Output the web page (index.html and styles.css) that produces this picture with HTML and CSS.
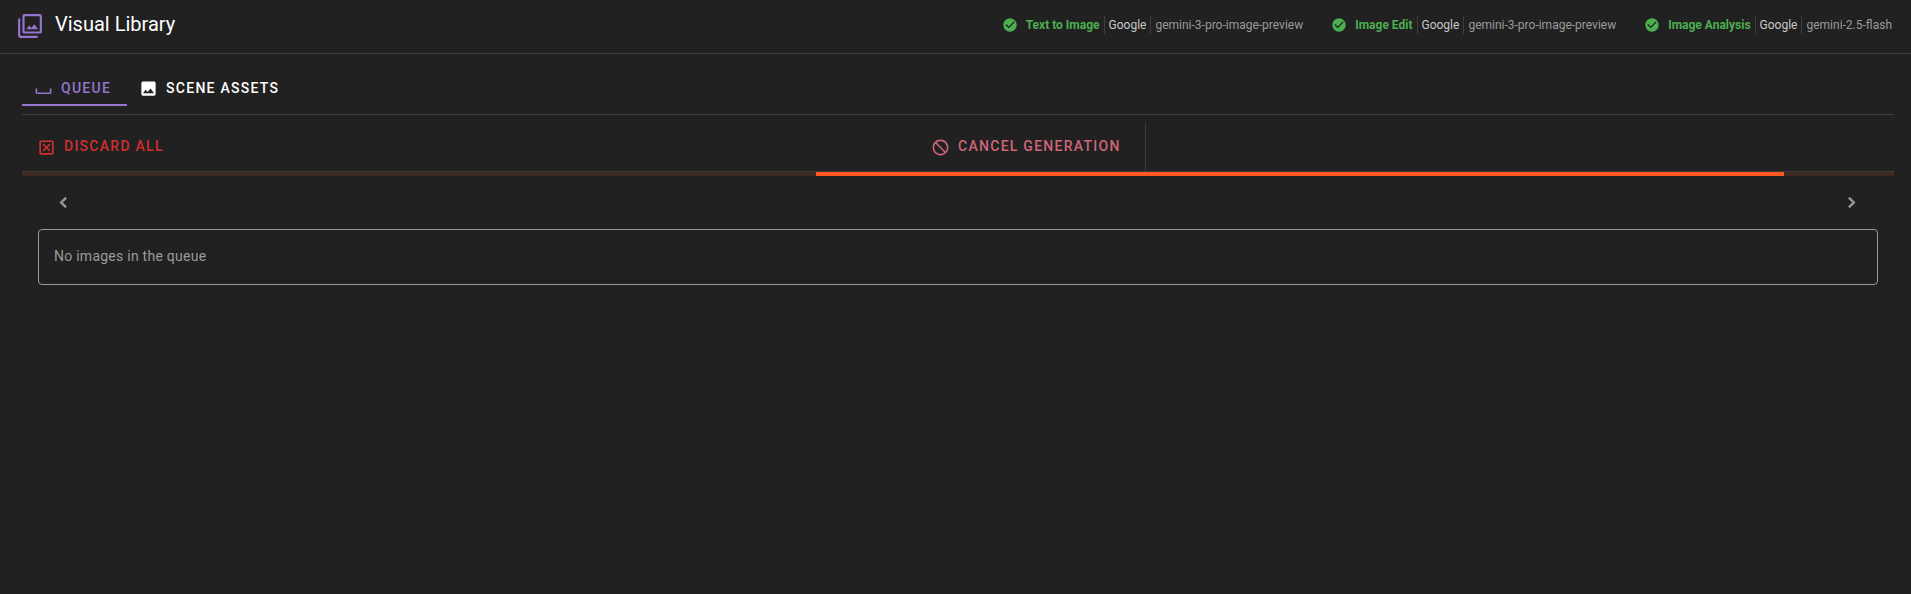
FILE: index.html
```html
<!DOCTYPE html>
<html lang="en">
<head>
    <meta charset="UTF-8">
    <meta name="viewport" content="width=device-width, initial-scale=1.0">
    <title>Visual Library</title>
    <link rel="stylesheet" href="styles.css">
</head>
<body>
    <header class="toolbar">
        <svg class="logo" viewBox="0 0 24 24" aria-hidden="true"><path d="M21,17H7V3H21M21,1H7A2,2 0 0,0 5,3V17A2,2 0 0,0 7,19H21A2,2 0 0,0 23,17V3A2,2 0 0,0 21,1M3,5H1V21A2,2 0 0,0 3,23H19V21H3M15.96,10.29L13.21,13.83L11.25,11.47L8.5,15H19.5L15.96,10.29Z"/></svg>
        <h1 class="title">Visual Library</h1>

        <ul class="backends">
            <li class="backend">
                <svg class="status" viewBox="0 0 24 24" aria-hidden="true"><path d="M12 2C6.5 2 2 6.5 2 12S6.5 22 12 22 22 17.5 22 12 17.5 2 12 2M10 17L5 12L6.41 10.59L10 14.17L17.59 6.58L19 8L10 17Z"/></svg>
                <span class="kind">Text to Image</span>
                <span class="provider">Google</span>
                <span class="model">gemini-3-pro-image-preview</span>
            </li>
            <li class="backend">
                <svg class="status" viewBox="0 0 24 24" aria-hidden="true"><path d="M12 2C6.5 2 2 6.5 2 12S6.5 22 12 22 22 17.5 22 12 17.5 2 12 2M10 17L5 12L6.41 10.59L10 14.17L17.59 6.58L19 8L10 17Z"/></svg>
                <span class="kind">Image Edit</span>
                <span class="provider">Google</span>
                <span class="model">gemini-3-pro-image-preview</span>
            </li>
            <li class="backend">
                <svg class="status" viewBox="0 0 24 24" aria-hidden="true"><path d="M12 2C6.5 2 2 6.5 2 12S6.5 22 12 22 22 17.5 22 12 17.5 2 12 2M10 17L5 12L6.41 10.59L10 14.17L17.59 6.58L19 8L10 17Z"/></svg>
                <span class="kind">Image Analysis</span>
                <span class="provider">Google</span>
                <span class="model">gemini-2.5-flash</span>
            </li>
        </ul>
    </header>

    <main class="content">
        <nav class="tabs" role="tablist">
            <button class="tab active" type="button" role="tab" aria-selected="true">
                <svg class="icon" viewBox="0 0 24 24" aria-hidden="true"><path d="M2 12H4V17H20V12H22V17C22 18.11 21.11 19 20 19H4C2.9 19 2 18.11 2 17V12Z"/></svg>
                Queue
            </button>
            <button class="tab" type="button" role="tab" aria-selected="false">
                <svg class="icon" viewBox="0 0 24 24" aria-hidden="true"><path d="M8.5,13.5L11,16.5L14.5,12L19,18H5M21,19V5C21,3.89 20.1,3 19,3H5A2,2 0 0,0 3,5V19A2,2 0 0,0 5,21H19A2,2 0 0,0 21,19Z"/></svg>
                Scene Assets
            </button>
        </nav>

        <div class="actions">
            <button class="action discard" type="button">
                <svg class="icon" viewBox="0 0 24 24" aria-hidden="true"><path d="M19,19H5V5H19M19,3H5A2,2 0 0,0 3,5V19A2,2 0 0,0 5,21H19A2,2 0 0,0 21,19V5C21,3.89 20.1,3 19,3M17,8.4L13.4,12L17,15.6L15.6,17L12,13.4L8.4,17L7,15.6L10.6,12L7,8.4L8.4,7L12,10.6L15.6,7L17,8.4Z"/></svg>
                Discard All
            </button>
            <div class="generation">
                <button class="action cancel" type="button">
                    <svg class="icon" viewBox="0 0 24 24" aria-hidden="true"><path d="M12 2C17.5 2 22 6.5 22 12S17.5 22 12 22 2 17.5 2 12 6.5 2 12 2M12 4C10.1 4 8.4 4.6 7.1 5.7L18.3 16.9C19.3 15.5 20 13.8 20 12C20 7.6 16.4 4 12 4M16.9 18.3L5.7 7.1C4.6 8.4 4 10.1 4 12C4 16.4 7.6 20 12 20C13.9 20 15.6 19.4 16.9 18.3Z"/></svg>
                    Cancel Generation
                </button>
            </div>
        </div>

        <div class="progress" role="progressbar" aria-label="Generating">
            <div class="progress-bar"></div>
        </div>

        <div class="pager">
            <button class="page-btn" type="button" aria-label="Previous image">
                <svg viewBox="0 0 24 24" aria-hidden="true"><path d="M15.41,16.58L10.83,12L15.41,7.41L14,6L8,12L14,18L15.41,16.58Z"/></svg>
            </button>
            <button class="page-btn" type="button" aria-label="Next image">
                <svg viewBox="0 0 24 24" aria-hidden="true"><path d="M8.59,16.58L13.17,12L8.59,7.41L10,6L16,12L10,18L8.59,16.58Z"/></svg>
            </button>
        </div>

        <p class="empty">No images in the queue</p>
    </main>
</body>
</html>
```
FILE: styles.css
```css
* {
    margin: 0;
    padding: 0;
    box-sizing: border-box;
}

body {
    min-height: 100vh;
    background: #212121;
    color: #fff;
    font-family: Roboto, sans-serif;
    font-size: 14px;
}

button {
    background: none;
    border: none;
    color: inherit;
    font: inherit;
    cursor: pointer;
}

svg {
    display: block;
    flex: none;
    fill: currentColor;
}

/* header */
.toolbar {
    display: flex;
    align-items: center;
    height: 54px;
    padding: 0 19px 4px 17px;
    border-bottom: 1px solid #3d3d3d;
}

.logo {
    width: 26px;
    height: 26px;
    margin-top: 3px;
    color: #9575cd;
}

.title {
    margin-left: 12px;
    padding-bottom: 1px;
    font-size: 20px;
    font-weight: 400;
    line-height: 24px;
}

.backends {
    display: flex;
    gap: 28px;
    margin-left: auto;
    list-style: none;
    font-size: 12px;
    line-height: 18px;
}

.backend {
    display: flex;
    align-items: center;
}

.status {
    width: 16px;
    height: 16px;
    margin-right: 8px;
    color: #4caf50;
}

.kind {
    padding-right: 4px;
    color: #4caf50;
    font-weight: 700;
}

.provider {
    padding: 0 4px;
    border-left: 1px solid #3d3d3d;
    border-right: 1px solid #3d3d3d;
    color: #c8c8c8;
}

.model {
    padding-left: 4px;
    color: #9a9a9a;
}

/* tabs */
.content {
    padding: 16px 17px 0 22px;
}

.tabs {
    display: flex;
    padding-bottom: 8px;
    border-bottom: 1px solid #3d3d3d;
}

.tab,
.action {
    display: flex;
    align-items: center;
    gap: 8px;
    height: 36px;
    font-weight: 500;
    letter-spacing: 0.09em;
    text-transform: uppercase;
}

.tab {
    padding: 2px 16px 0 12px;
    border-bottom: 2px solid transparent;
}

.tab.active {
    border-color: #9575cd;
    color: #9575cd;
}

.icon {
    width: 19px;
    height: 19px;
}

/* queue actions */
.actions {
    display: flex;
    align-items: center;
    height: 57px;
    padding: 8px 12px 0 0;
    border-bottom: 1px solid #3d3d3d;
}

.generation {
    display: flex;
    align-items: center;
    height: 48px;
    margin: 0 auto;
    padding-right: 8px;
    border-right: 1px solid #3d3d3d;
}

.action {
    padding: 0 16px 2px 15px;
}

.action .icon {
    margin-top: 2px;
}

.discard {
    color: #d32f2f;
}

.cancel {
    color: #cf6679;
}

.progress {
    height: 4px;
    background: #3d2821;
}

.progress-bar {
    width: 51.7%;
    height: 4px;
    margin-left: 42.4%;
    background: #ff5722;
}

/* image list */
.pager {
    display: flex;
    justify-content: space-between;
    padding: 8px 25px 9px 23px;
}

.page-btn {
    display: grid;
    place-items: center;
    width: 36px;
    height: 36px;
    color: #9a9a9a;
}

.page-btn svg {
    width: 21px;
    height: 21px;
    stroke: currentColor;
}

.empty {
    margin: 0 16px;
    padding: 15px 15px 17px;
    border: 1px solid #9a9a9a;
    border-radius: 4px;
    color: #9a9a9a;
    letter-spacing: 0.018em;
    line-height: 22px;
}
```
